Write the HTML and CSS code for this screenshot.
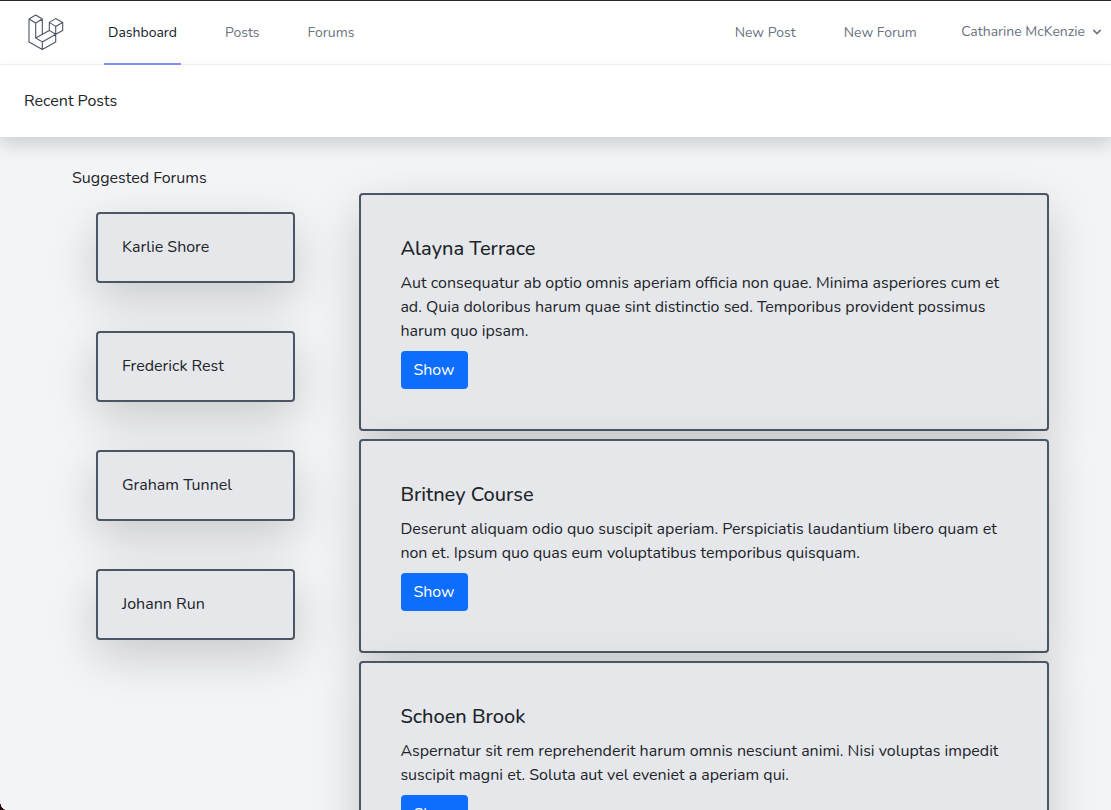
FILE: index.html
```
<!DOCTYPE html>
<html lang="en">
<head>
<meta charset="utf-8">
<title>Dashboard</title>
<link rel="stylesheet" href="styles.css">
</head>
<body>
<nav class="nav">
  <a class="logo" href="#" aria-label="Home">
    <svg width="36" height="36" viewBox="0 0 36 36"><path d="M1 5 7.7 1 14.3 5V20.3M1 5 7.7 9 14.3 5M1 5V27.9L14.3 35.5 27.7 27.9V20.3L34.7 16.4V8.4L27.7 4.6 21.3 8.4V16.4L7.7 24V9M7.7 24 14.3 27.9V35.5M14.3 27.9 27.7 20.3V12.4L21.3 8.4M27.7 12.4 34.7 8.4M21.3 16.4 27.7 20.3"/></svg>
  </a>
  <div class="links">
    <a class="link active" href="#">Dashboard</a>
    <a class="link" href="#">Posts</a>
    <a class="link" href="#">Forums</a>
  </div>
  <div class="links right">
    <a class="link" href="#">New Post</a>
    <a class="link" href="#">New Forum</a>
  </div>
  <button class="user">Catharine McKenzie
    <svg width="16" height="16" viewBox="0 0 20 20"><path d="M5.3 7.3a1 1 0 0 1 1.4 0L10 10.6l3.3-3.3a1 1 0 1 1 1.4 1.4l-4 4a1 1 0 0 1-1.4 0l-4-4a1 1 0 0 1 0-1.4z"/></svg>
  </button>
</nav>
<header class="header">Recent Posts</header>
<main class="main">
  <aside class="side">
    <div class="side-title">Suggested Forums</div>
    <div class="forum">Karlie Shore</div>
    <div class="forum">Frederick Rest</div>
    <div class="forum">Graham Tunnel</div>
    <div class="forum">Johann Run</div>
  </aside>
  <section class="posts">
    <article class="post">
      <h2>Alayna Terrace</h2>
      <p>Aut consequatur ab optio omnis aperiam officia non quae. Minima asperiores cum et ad. Quia doloribus harum quae sint distinctio sed. Temporibus provident possimus harum quo ipsam.</p>
      <a class="btn" href="#">Show</a>
    </article>
    <article class="post">
      <h2>Britney Course</h2>
      <p>Deserunt aliquam odio quo suscipit aperiam. Perspiciatis laudantium libero quam et non et. Ipsum quo quas eum voluptatibus temporibus quisquam.</p>
      <a class="btn" href="#">Show</a>
    </article>
    <article class="post">
      <h2>Schoen Brook</h2>
      <p>Aspernatur sit rem reprehenderit harum omnis nesciunt animi. Nisi voluptas impedit suscipit magni et. Soluta aut vel eveniet a aperiam qui.</p>
      <a class="btn" href="#">Show</a>
    </article>
  </section>
</main>
<div class="window-corner"></div>
</body>
</html>
```
FILE: styles.css
```
* { box-sizing: border-box; margin: 0; }
body { height: 810px; overflow: hidden; background: #f3f4f6; color: #212529; font: 16px/24px Nunito, Lato, sans-serif; border-top: 1px solid #2b2a2c; }
a { color: inherit; text-decoration: none; }
.nav { display: flex; height: 64px; background: #fff; border-bottom: 1px solid #f3f4f6; padding-left: 28px; font-size: 14px; line-height: 20px; color: #6b7280; }
.logo { width: 36px; padding-top: 13px; margin-right: 40px; }
.logo path { fill: none; stroke: #4b5563; stroke-width: 1.1; stroke-linejoin: round; }
.links { display: flex; gap: 40px; }
.link { display: flex; align-items: center; padding: 2px 4px 0; height: 64px; border-bottom: 2px solid transparent; }
.active { color: #111827; border-color: #818cf8; }
.right { margin-left: auto; }
.user { display: flex; align-items: center; gap: 4px; padding: 0 6px 2px; margin-left: 34.3px; border: 0; background: none; font: inherit; color: inherit; }
.user path { fill: #6b7280; }
.header { height: 72px; padding: 24px; background: #fff; box-shadow: 0 8px 16px rgba(0,0,0,.15); }
.main { display: flex; padding: 29px 62px 0 72px; }
.side { width: 286.6px; padding-right: 63.6px; }
.forum { height: 71px; margin: 0 0 48px 24px; padding: 21px 24px; border: 2px solid #4b5563; border-radius: 4px; background: #e5e7eb; box-shadow: 0 16px 48px rgba(0,0,0,.175); }
.side-title { margin-bottom: 22px; }
.posts { flex: 1; padding-top: 27px; }
.post { margin-bottom: 8px; padding: 40px 40px 40px 39.8px; border: 2px solid #4b5563; border-radius: 4px; background: #e5e7eb; box-shadow: 0 16px 48px rgba(0,0,0,.175); }
h2 { font-size: 20px; line-height: 28px; font-weight: 500; margin-bottom: 8px; }
p { margin-bottom: 8px; }
.btn { display: block; width: 67px; height: 38px; margin-left: .3px; padding: 7px 12.7px; border-radius: 4px; background: #0d6efd; color: #fff; }
.window-corner { position: absolute; left: 0; bottom: 0; width: 6px; height: 9px; background: radial-gradient(ellipse 6px 9px at 100% 0, transparent 96%, #24080c 100%); }
```
